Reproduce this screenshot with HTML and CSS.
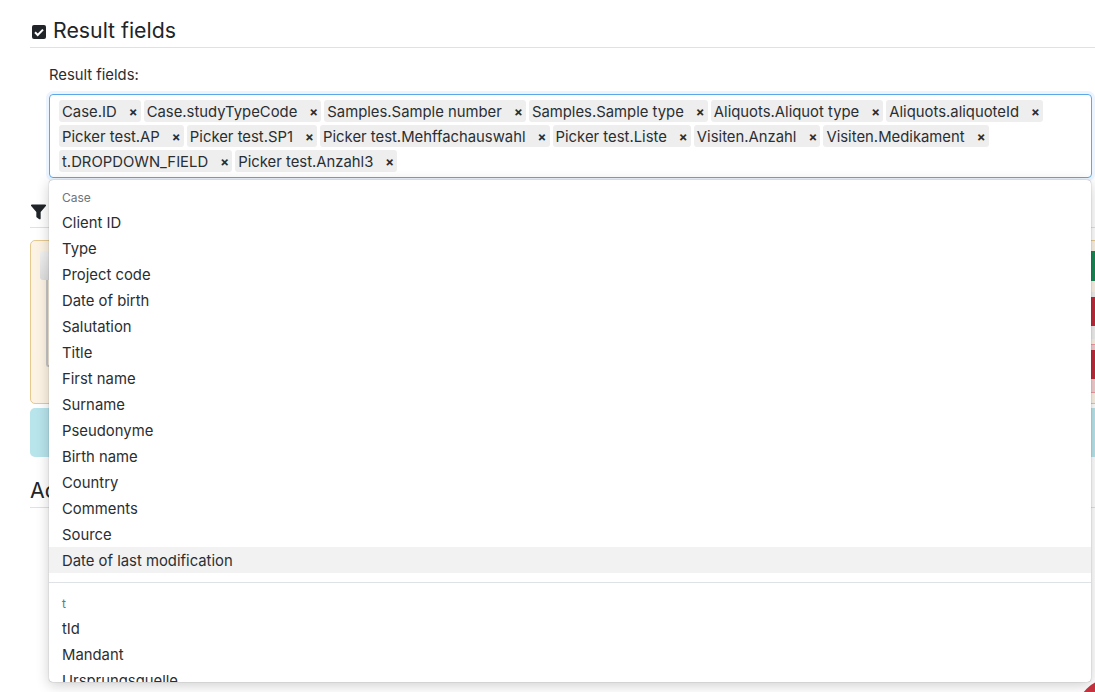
FILE: index.html
```html
<!DOCTYPE html>
<html lang="en">
<head>
<meta charset="utf-8">
<title>Result fields</title>
<link rel="stylesheet" href="styles.css">
</head>
<body>
<main class="page">
  <section class="section">
    <h2 class="heading">
      <svg class="check-icon" viewBox="0 0 14 14"><rect width="14" height="14" rx="2" fill="#212529"/><path d="M3 7.300l2.700 2.700L11 4.600" fill="none" stroke="#fff" stroke-width="2"/></svg>
      <span>Result fields</span>
    </h2>
    <div class="field">
      <label class="field-label">Result fields:</label>
      <div class="tag-input">
        <span class="tag">Case.ID<i class="tag-x">×</i></span>
        <span class="tag">Case.studyTypeCode<i class="tag-x">×</i></span>
        <span class="tag">Samples.Sample number<i class="tag-x">×</i></span>
        <span class="tag">Samples.Sample type<i class="tag-x">×</i></span>
        <span class="tag">Aliquots.Aliquot type<i class="tag-x">×</i></span>
        <span class="tag">Aliquots.aliquoteId<i class="tag-x">×</i></span>
        <span class="tag">Picker test.AP<i class="tag-x">×</i></span>
        <span class="tag">Picker test.SP1<i class="tag-x">×</i></span>
        <span class="tag">Picker test.Mehffachauswahl<i class="tag-x">×</i></span>
        <span class="tag">Picker test.Liste<i class="tag-x">×</i></span>
        <span class="tag">Visiten.Anzahl<i class="tag-x">×</i></span>
        <span class="tag">Visiten.Medikament<i class="tag-x">×</i></span>
        <span class="tag">t.DROPDOWN_FIELD<i class="tag-x">×</i></span>
        <span class="tag">Picker test.Anzahl3<i class="tag-x">×</i></span>
      </div>
      <div class="dropdown">
        <div class="group-label">Case</div>
        <div class="option">Client ID</div>
        <div class="option">Type</div>
        <div class="option">Project code</div>
        <div class="option">Date of birth</div>
        <div class="option">Salutation</div>
        <div class="option">Title</div>
        <div class="option">First name</div>
        <div class="option">Surname</div>
        <div class="option">Pseudonyme</div>
        <div class="option">Birth name</div>
        <div class="option">Country</div>
        <div class="option">Comments</div>
        <div class="option">Source</div>
        <div class="option option-active">Date of last modification</div>
        <div class="divider"></div>
        <div class="group-label">t</div>
        <div class="option">tId</div>
        <div class="option">Mandant</div>
        <div class="option">Ursprungsquelle</div>
      </div>
    </div>
  </section>

  <section class="section filter-section">
    <h2 class="heading">
      <svg class="filter-icon" viewBox="0 0 16 16"><path d="M1 0h14c1 0 1.400 1 .800 1.700L10.300 8v6.800c0 .8-.8 1.300-1.500.8l-2.500-1.800a1 1 0 0 1-.6-.8V8L.2 1.700C-.4 1 0 0 1 0z" fill="#212529"/></svg>
      <span>Filter</span>
    </h2>
    <div class="rule-box">
      <div class="rule-tree">
        <div class="tree-button"></div>
        <div class="tree-line"></div>
      </div>
      <div class="rule-actions">
        <div class="btn-green"></div>
        <div class="row-grey"><div class="btn-red"></div></div>
        <div class="row-pink"><div class="btn-red"></div></div>
      </div>
    </div>
    <div class="info-box"></div>
  </section>

  <section class="section add-section">
    <h2 class="heading"><span>Add</span></h2>
  </section>
  <div class="fab"></div>
</main>
</body>
</html>
```
FILE: styles.css
```css
html, body {
  margin: 0;
  height: 692px;
  overflow: hidden;
  background: #fff;
}
body {
  font-family: Inter, "Noto Sans", sans-serif;
  font-size: 14.85px;
  color: #2a2e32;
}
.page {
  position: relative;
  width: 1125px;
  height: 692px;
  padding: 14px 0 0 30px;
  box-sizing: border-box;
  overflow: hidden;
}
.section { width: 1095px; }
.heading {
  display: flex;
  align-items: center;
  gap: 7px;
  margin: 0;
  height: 33px;
  font-size: 21.3px;
  font-weight: 400;
  color: #212529;
  border-bottom: 1px solid #dee2e6;
}
.heading span { position: relative; top: -1px; }
.check-icon { width: 14px; height: 14px; margin-left: 2px; flex: none; margin-top: 3px; }
.filter-icon { width: 15px; height: 16px; margin-left: 1px; flex: none; margin-top: 2px; }
.field { position: relative; padding: 18px 0 0 19px; }
.field-label { display: block; height: 28px; line-height: 19px; font-size: 14.8px; }
.tag-input {
  width: 1043px;
  height: 84px;
  box-sizing: border-box;
  padding: 5px 9px;
  display: flex;
  flex-wrap: wrap;
  gap: 3px;
  align-content: flex-start;
  border: 1px solid #5ba8e6;
  border-radius: 4px;
  box-shadow: 0 0 0 3px rgba(13, 110, 253, .08);
}
.tag {
  display: inline-flex;
  align-items: center;
  height: 22px;
  box-sizing: border-box;
  padding: 2px 5px 0 3px;
  background: #eee;
  border-radius: 3px;
  line-height: 20px;
}
.tag-x {
  margin-left: 12px;
  width: 7px;
  font-style: normal;
  font-weight: 700;
  font-size: 13px;
  text-align: center;
}
.dropdown {
  position: absolute;
  left: 19px;
  top: 132px;
  z-index: 5;
  width: 1042px;
  height: 502px;
  box-sizing: border-box;
  padding-top: 5px;
  overflow: hidden;
  background: #fff;
  border-radius: 4px;
  box-shadow: 0 0 1px rgba(0,0,0,.5), 0 3px 14px rgba(0,0,0,.2);
}
.group-label {
  height: 24px;
  box-sizing: border-box;
  padding: 1px 0 0 13px;
  line-height: 23px;
  font-size: 12px;
  color: #6c757d;
}
.option {
  height: 26px;
  box-sizing: border-box;
  padding: 2px 0 0 13px;
  line-height: 24px;
}
.option-active { background: #f2f2f2; }
.divider { height: 1px; margin: 9px 0 8px; background: #dee2e6; }
.filter-section { margin-top: 16px; }
.rule-box {
  display: flex;
  justify-content: space-between;
  height: 164px;
  margin-top: 12px;
  box-sizing: border-box;
  padding-top: 10px;
  background: #fcf3e4;
  border: 1px solid #e5c98f;
  border-radius: 5px;
}
.rule-tree { padding-left: 9px; }
.tree-button { width: 40px; height: 29px; background: linear-gradient(#f2f2f2, #ddd); border-radius: 3px; }
.tree-line { width: 40px; height: 85px; margin-left: 6px; border-left: 2px solid #c4c4c4; border-bottom: 2px solid #c4c4c4; border-bottom-left-radius: 3px; }
.rule-actions { display: flex; flex-direction: column; width: 33px; }
.btn-green { height: 30px; background: #198754; }
.row-grey { margin-top: 11px; height: 47px; padding-top: 5px; box-sizing: border-box; background: #eee; }
.btn-red { height: 29px; background: #bd2b3a; }
.row-pink { margin-top: 5px; height: 49px; padding-top: 5px; box-sizing: border-box; background: #f4cdd0; border-top: 1px solid #f2989f; border-bottom: 1px solid #f2989f; }
.info-box {
  height: 49px;
  margin-top: 4px;
  background: #b8e4ec;
  border-radius: 5px;
}
.add-section { margin-top: 17px; }
.fab {
  position: absolute;
  left: 1077px;
  top: 679px;
  width: 66px;
  height: 66px;
  border-radius: 50%;
  background: #c8323f;
}
```
